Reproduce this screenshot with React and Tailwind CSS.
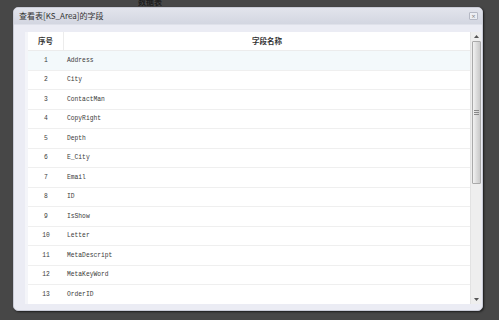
import React from 'react';

const fields = [
  'Address', 'City', 'ContactMan', 'CopyRight', 'Depth', 'E_City', 'Email',
  'ID', 'IsShow', 'Letter', 'MetaDescript', 'MetaKeyWord', 'OrderID',
];

const cjk = { fontFamily: '"Noto Sans CJK SC", "Liberation Sans", sans-serif' };
const mono = { fontFamily: '"Liberation Mono", "Noto Sans CJK SC", monospace' };

const App = () => {
  return (
    <div className="relative w-[499px] h-[320px] overflow-hidden bg-[#474747]">
      {/* page behind the dialog */}
      <div className="absolute left-[138px] top-[-4px] text-[8px] font-bold text-[#1e1e1e]" style={cjk}>
        数据表
      </div>

      {/* dialog */}
      <div className="absolute left-[13px] top-[7px] w-[470px] h-[304px] flex flex-col rounded-[5px] bg-[#ebecf4] border border-[#c9cbd6] overflow-hidden shadow-[1px_1px_2px_rgba(0,0,0,0.6)]">
        <div className="h-[17px] shrink-0 flex items-center justify-between pl-[5px] pr-[4px] bg-gradient-to-b from-[#e2e4ec] to-[#d3d6e1] border-b border-[#dfe1ea]">
          <span className="text-[8px] text-[#333] leading-none" style={cjk}>查看表[KS_Area]的字段</span>
          <span className="w-[9px] h-[8px] flex items-center justify-center rounded-[1px] border border-[#b5b8c4] bg-[#eceef3] text-[7px] leading-none text-[#888]">×</span>
        </div>

        <div className="flex-1 flex pt-[7px] pb-[6px] pl-[11px] pr-[1px] min-h-0">
          <div className="flex-1 flex border-l-[3px] border-[#f4f5f9] min-h-0">
            <div className="flex-1 bg-white overflow-hidden min-h-0">
              <div className="flex h-[19px] border-b border-[#ececec] text-[7.5px] font-bold text-[#333]" style={cjk}>
                <div className="w-[36px] flex items-center justify-center border-r border-[#ececec]">序号</div>
                <div className="flex-1 flex items-center justify-center">字段名称</div>
              </div>
              {fields.map((name, i) => (
                <div
                  key={name}
                  className={`flex h-[19.5px] border-b border-[#efefef] text-[6.3px] text-[#3a3a3a] ${i === 0 ? 'bg-[#f3f9fb]' : ''}`}
                  style={mono}
                >
                  <div className="w-[36px] flex items-center justify-center">{i + 1}</div>
                  <div className="flex-1 flex items-center pl-[3px]">{name}</div>
                </div>
              ))}
            </div>

            {/* scrollbar */}
            <div className="w-[11px] shrink-0 flex flex-col items-center bg-[#eeeeee] border-l border-[#e2e2e2]">
              <div className="h-[9px] flex items-center justify-center">
                <svg width="5" height="3" viewBox="0 0 5 3"><path d="M0 3 L2.5 0 L5 3 Z" fill="#555" /></svg>
              </div>
              <div className="w-[9px] h-[143px] rounded-[1px] border border-[#a9a9a9] bg-gradient-to-r from-[#f2f2f2] via-[#dcdcdc] to-[#c9c9c9] flex items-center justify-center">
                <div className="flex flex-col gap-[1px]">
                  <div className="w-[5px] h-[1px] bg-[#888]" />
                  <div className="w-[5px] h-[1px] bg-[#888]" />
                  <div className="w-[5px] h-[1px] bg-[#888]" />
                </div>
              </div>
              <div className="flex-1" />
              <div className="h-[9px] flex items-center justify-center">
                <svg width="5" height="3" viewBox="0 0 5 3"><path d="M0 0 L2.5 3 L5 0 Z" fill="#555" /></svg>
              </div>
            </div>
          </div>
        </div>
      </div>
    </div>
  );
};

export default App;
